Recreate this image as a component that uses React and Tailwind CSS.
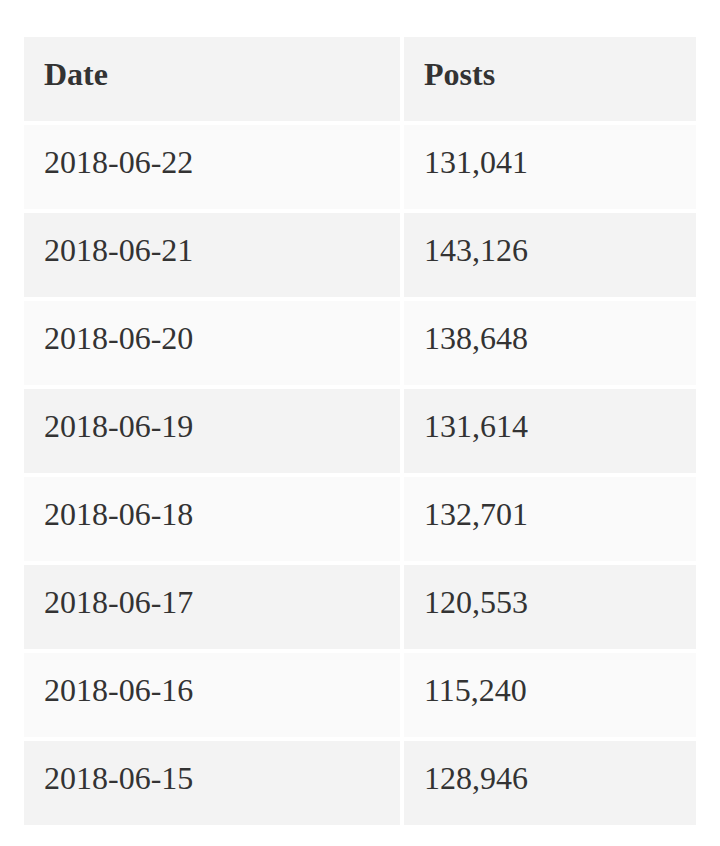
const rows = [
  ['2018-06-22', '131,041'],
  ['2018-06-21', '143,126'],
  ['2018-06-20', '138,648'],
  ['2018-06-19', '131,614'],
  ['2018-06-18', '132,701'],
  ['2018-06-17', '120,553'],
  ['2018-06-16', '115,240'],
  ['2018-06-15', '128,946'],
];

function Cell({ children, className = '' }) {
  return (
    <div className={`h-[84px] pl-5 pt-[21px] text-[32px] leading-none ${className}`}>
      {children}
    </div>
  );
}

export default function App() {
  return (
    <div
      className="min-h-[846px] bg-white px-6 pt-[37px] text-[#333]"
      style={{ fontFamily: '"Liberation Serif", serif' }}
    >
      <div className="grid grid-cols-[376px_1fr] gap-1">
        <Cell className="bg-[#f3f3f3] font-bold">Date</Cell>
        <Cell className="bg-[#f3f3f3] font-bold">Posts</Cell>
        {rows.map(([date, posts], i) => {
          const bg = i % 2 === 0 ? 'bg-[#fafafa]' : 'bg-[#f3f3f3]';
          return [
            <Cell key={date + 'd'} className={bg}>{date}</Cell>,
            <Cell key={date + 'p'} className={bg}>{posts}</Cell>,
          ];
        })}
      </div>
    </div>
  );
}
